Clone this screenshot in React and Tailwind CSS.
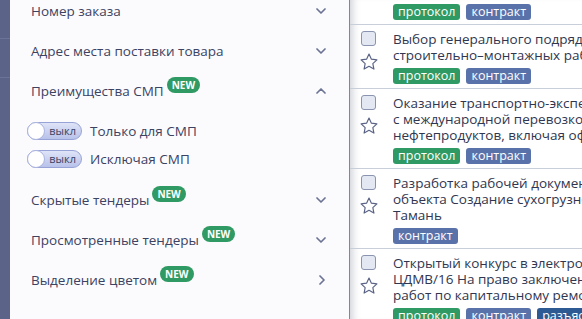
import React from "react";

const Chevron = ({ dir = "down" }) => {
  const pts =
    dir === "down" ? "1,1 5,5 9,1" : dir === "up" ? "1,5 5,1 9,5" : "1,1 5,5 1,9";
  const w = dir === "right" ? 7 : 10;
  const h = dir === "right" ? 10 : 6;
  return (
    <svg width={w} height={h} viewBox={`0 0 ${w} ${h}`} className="shrink-0">
      <polyline points={pts} fill="none" stroke="#6b7394" strokeWidth="1.7" strokeLinecap="round" strokeLinejoin="round" />
    </svg>
  );
};

const New = () => (
  <span className="relative -top-[6px] ml-[3px] inline-flex h-[16px] items-center rounded-full bg-[#2f9a63] px-[5px] text-[10px] font-bold leading-none text-white">
    NEW
  </span>
);

const Item = ({ label, isNew, dir = "down" }) => (
  <div className="flex h-10 items-center justify-between pr-[23px]">
    <div className="flex items-center">
      <span>{label}</span>
      {isNew && <New />}
    </div>
    <Chevron dir={dir} />
  </div>
);

const Toggle = ({ label }) => (
  <div className="flex h-7 items-center">
    <div className="relative ml-[-4px] h-[18px] w-[55px] rounded-full border border-[#97a3d6] bg-gradient-to-b from-[#dfe4f7] to-[#b8c2ea]">
      <div className="absolute left-[-1px] top-[-1px] h-[18px] w-[18px] rounded-full border border-[#aab4df] bg-white" />
      <span className="absolute right-[5px] top-0 text-[11px] leading-[16px] text-[#3b4262]">выкл</span>
    </div>
    <span className="ml-[8px]">{label}</span>
  </div>
);

const Tag = ({ children, color }) => (
  <span className={`inline-flex h-4 items-center rounded-[3px] px-[5px] text-[12.5px] leading-4 text-white ${color}`}>
    {children}
  </span>
);

const Star = () => (
  <svg width="20" height="20" viewBox="0 0 24 24" className="ml-[-2px]">
    <polygon
      points="12,2.5 14.9,8.6 21.5,9.4 16.6,13.9 17.9,20.5 12,17.2 6.1,20.5 7.4,13.9 2.5,9.4 9.1,8.6"
      fill="none"
      stroke="#5a6385"
      strokeWidth="1.4"
      strokeLinejoin="round"
    />
  </svg>
);

const GREEN = "bg-[#2f9a63]";
const BLUE = "bg-[#5a72aa]";
const DARK = "bg-[#2d5a92]";

const Row = ({ lines, tags }) => (
  <div className="flex border-b border-[#c9cedb] pt-[6px] pb-[4px]">
    <div className="flex w-[43px] shrink-0 flex-col pl-[11px]">
      <div className="h-[15px] w-[15px] rounded-[3px] border border-[#8a93b0] bg-[#e4e8f2]" />
      <div className="mt-[6px]">
        <Star />
      </div>
    </div>
    <div className="min-w-0 flex-1">
      {lines.map((l, i) => (
        <div key={i} className="whitespace-nowrap leading-4">
          {l}
        </div>
      ))}
      <div className="mt-[5px] flex gap-[6px] whitespace-nowrap">
        {tags.map(([t, c], i) => (
          <Tag key={i} color={c}>
            {t}
          </Tag>
        ))}
      </div>
    </div>
  </div>
);

export default function App() {
  return (
    <div
      className="flex h-[319px] w-[582px] overflow-hidden bg-white text-[13.5px]"
      style={{ fontFamily: '"Open Sans", "Noto Sans", sans-serif' }}
    >
      <div className="flex w-[10px] shrink-0 flex-col bg-[#5b6488]">
        <div className="h-[39px] border-b border-[#6b7498]" />
        <div className="h-[39px] border-b border-[#6b7498]" />
      </div>
      <div className="w-[340px] shrink-0 border-r border-[#7d86a8] bg-[#fbfbfd] pl-[21px] text-[#3b4262]">
        <div className="mt-[-9px]">
          <Item label="Номер заказа" />
          <Item label="Адрес места поставки товара" />
          <Item label="Преимущества СМП" isNew dir="up" />
          <div className="pt-[6px] pb-[7px]">
            <Toggle label="Только для СМП" />
            <Toggle label="Исключая СМП" />
          </div>
          <Item label="Скрытые тендеры" isNew />
          <Item label="Просмотренные тендеры" isNew />
          <Item label="Выделение цветом" isNew dir="right" />
        </div>
      </div>
      <div className="min-w-0 flex-1 overflow-hidden text-[#30364f] shadow-[inset_9px_0_8px_-7px_rgba(60,66,100,0.28)]">
        <div className="flex gap-[6px] border-b border-[#c9cedb] pt-[4px] pb-[4px] pl-[43px] whitespace-nowrap">
          <Tag color={GREEN}>протокол</Tag>
          <Tag color={BLUE}>контракт</Tag>
        </div>
        <Row
          lines={["Выбор генерального подрядчика на выполнение", "строительно–монтажных работ по объекту"]}
          tags={[["протокол", GREEN], ["контракт", BLUE]]}
        />
        <Row
          lines={[
            "Оказание транспортно-экспедиционных услуг",
            "с международной перевозкой грузов",
            "нефтепродуктов, включая оформление",
          ]}
          tags={[["протокол", GREEN], ["контракт", BLUE]]}
        />
        <Row
          lines={["Разработка рабочей документации для", "объекта Создание сухогрузного района порта", "Тамань"]}
          tags={[["контракт", BLUE]]}
        />
        <Row
          lines={[
            "Открытый конкурс в электронной форме №",
            "ЦДМВ/16 На право заключения договора",
            "работ по капитальному ремонту",
          ]}
          tags={[["протокол", GREEN], ["контракт", BLUE], ["разъяснения", DARK]]}
        />
      </div>
    </div>
  );
}
